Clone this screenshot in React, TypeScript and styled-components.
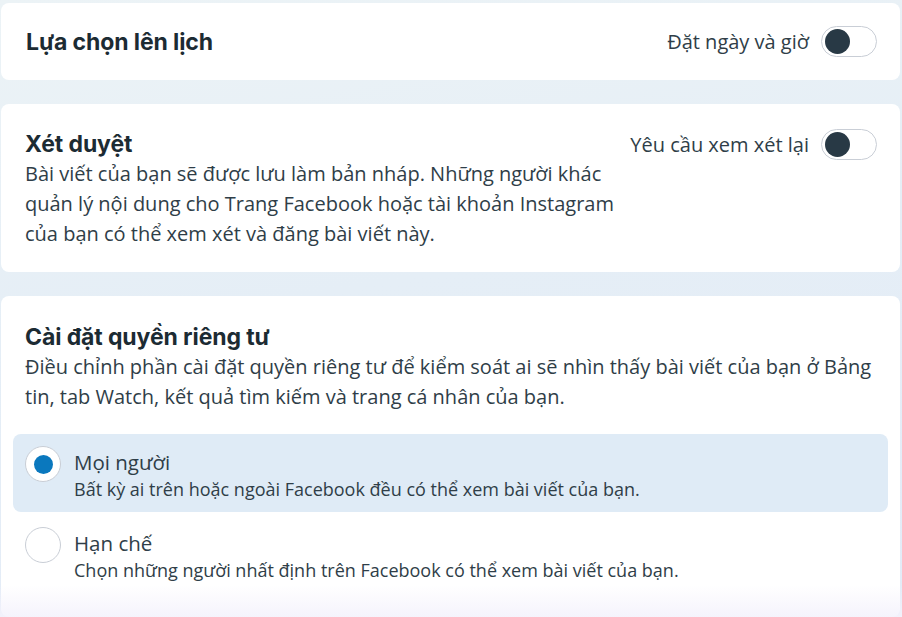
import React, { useState } from "react";
import styled, { createGlobalStyle } from "styled-components";

const GlobalStyle = createGlobalStyle`
  html, body {
    margin: 0;
    padding: 0;
  }
  body {
    font-family: "Open Sans", "Noto Sans", sans-serif;
    color: #1c2b33;
  }
`;

type Option = {
  id: string;
  label: string;
  hint: string;
};

const OPTIONS: Option[] = [
  {
    id: "public",
    label: "Mọi người",
    hint: "Bất kỳ ai trên hoặc ngoài Facebook đều có thể xem bài viết của bạn.",
  },
  {
    id: "restricted",
    label: "Hạn chế",
    hint: "Chọn những người nhất định trên Facebook có thể xem bài viết của bạn.",
  },
];

function Toggle({ label }: { label: string }) {
  const [on, setOn] = useState(false);
  return (
    <ToggleRow>
      <ToggleLabel>{label}</ToggleLabel>
      <Switch $on={on} onClick={() => setOn(!on)} aria-pressed={on}>
        <Knob $on={on} />
      </Switch>
    </ToggleRow>
  );
}

export default function App() {
  const [privacy, setPrivacy] = useState("public");

  return (
    <>
      <GlobalStyle />
      <Page>
        <InlineCard>
          <Title>Lựa chọn lên lịch</Title>
          <Toggle label="Đặt ngày và giờ" />
        </InlineCard>

        <ReviewCard>
          <TextColumn>
            <Title>Xét duyệt</Title>
            <Body>
              Bài viết của bạn sẽ được lưu làm bản nháp. Những người khác quản lý
              nội dung cho Trang Facebook hoặc tài khoản Instagram của bạn có thể
              xem xét và đăng bài viết này.
            </Body>
          </TextColumn>
          <Toggle label="Yêu cầu xem xét lại" />
        </ReviewCard>

        <PrivacyCard>
          <PrivacyHead>
            <Title>Cài đặt quyền riêng tư</Title>
            <Body>
              Điều chỉnh phần cài đặt quyền riêng tư để kiểm soát ai sẽ nhìn thấy
              bài viết của bạn ở Bảng tin, tab Watch, kết quả tìm kiếm và trang cá
              nhân của bạn.
            </Body>
          </PrivacyHead>
          <OptionList>
            {OPTIONS.map((opt) => (
              <OptionRow
                key={opt.id}
                $active={privacy === opt.id}
                onClick={() => setPrivacy(opt.id)}
              >
                <Radio $checked={privacy === opt.id} />
                <OptionText>
                  <OptionLabel>{opt.label}</OptionLabel>
                  <OptionHint>{opt.hint}</OptionHint>
                </OptionText>
              </OptionRow>
            ))}
          </OptionList>
        </PrivacyCard>
        <BottomFade />
      </Page>
    </>
  );
}

const Page = styled.div`
  position: relative;
  width: 902px;
  height: 617px;
  overflow: hidden;
  box-sizing: border-box;
  padding: 3px 2px 0 1px;
  display: flex;
  flex-direction: column;
  gap: 24px;
  background: linear-gradient(170deg, #ecf3f6 0%, #e5eef6 45%, #e3ebf7 100%);
`;

const Card = styled.section`
  background: #ffffff;
  border-radius: 8px;
  box-sizing: border-box;
  flex-shrink: 0;
`;

const InlineCard = styled(Card)`
  height: 77px;
  padding: 0 23px 0 25px;
  display: flex;
  align-items: center;
  justify-content: space-between;
`;

const ReviewCard = styled(Card)`
  padding: 25px 23px 23px 24px;
  display: flex;
  justify-content: space-between;
  align-items: flex-start;
`;

const PrivacyCard = styled(Card)`
  padding: 26px 12px 24px 12px;
  display: flex;
  flex-direction: column;
  gap: 22px;
`;

const PrivacyHead = styled.div`
  padding: 0 12px;
`;

const TextColumn = styled.div`
  width: 596px;
`;

const Title = styled.h2`
  margin: 0;
  font-family: Inter, Roboto, sans-serif;
  font-weight: 700;
  font-size: 23px;
  line-height: 30px;
  color: #1c2b33;
  letter-spacing: -0.1px;
`;

const Body = styled.p`
  margin: 0;
  font-size: 20px;
  line-height: 30px;
  color: #2f3e48;
`;

const ToggleRow = styled.div`
  display: flex;
  align-items: center;
  gap: 12px;
`;

const ToggleLabel = styled.span`
  font-size: 20px;
  color: #2f3e48;
`;

const Switch = styled.button<{ $on: boolean }>`
  width: 56px;
  height: 31px;
  padding: 0;
  border: 1px solid #c9ced6;
  border-radius: 16px;
  background: ${(p) => (p.$on ? "#0a78be" : "#ffffff")};
  display: flex;
  align-items: center;
  cursor: pointer;
  box-sizing: border-box;
`;

const Knob = styled.span<{ $on: boolean }>`
  width: 25px;
  height: 25px;
  border-radius: 50%;
  background: ${(p) => (p.$on ? "#ffffff" : "#283945")};
  margin-left: ${(p) => (p.$on ? "26px" : "3px")};
`;

const OptionList = styled.div`
  display: flex;
  flex-direction: column;
  gap: 3px;
`;

const OptionRow = styled.div<{ $active: boolean }>`
  padding: 12px 12px 10px;
  border-radius: 8px;
  display: flex;
  align-items: flex-start;
  gap: 13px;
  background: ${(p) => (p.$active ? "#dfebf6" : "transparent")};
  cursor: pointer;
`;

const Radio = styled.span<{ $checked: boolean }>`
  width: 36px;
  height: 36px;
  border-radius: 50%;
  border: 1px solid #c9ced6;
  background: #ffffff;
  box-sizing: border-box;
  flex-shrink: 0;
  display: flex;
  align-items: center;
  justify-content: center;

  &::after {
    content: "";
    width: 19px;
    height: 19px;
    border-radius: 50%;
    background: ${(p) => (p.$checked ? "#0a78be" : "transparent")};
  }
`;

const OptionText = styled.div`
  display: flex;
  flex-direction: column;
  margin-top: 2px;
`;

const OptionLabel = styled.span`
  font-size: 20.5px;
  line-height: 28px;
  color: #2f3e48;
`;

const OptionHint = styled.span`
  font-size: 18px;
  line-height: 26px;
  color: #2f3e48;
`;

const BottomFade = styled.div`
  position: absolute;
  left: 0;
  right: 0;
  bottom: 0;
  height: 32px;
  background: linear-gradient(
    to bottom,
    rgba(246, 244, 252, 0) 0%,
    rgba(244, 242, 252, 0.9) 100%
  );
  pointer-events: none;
`;
